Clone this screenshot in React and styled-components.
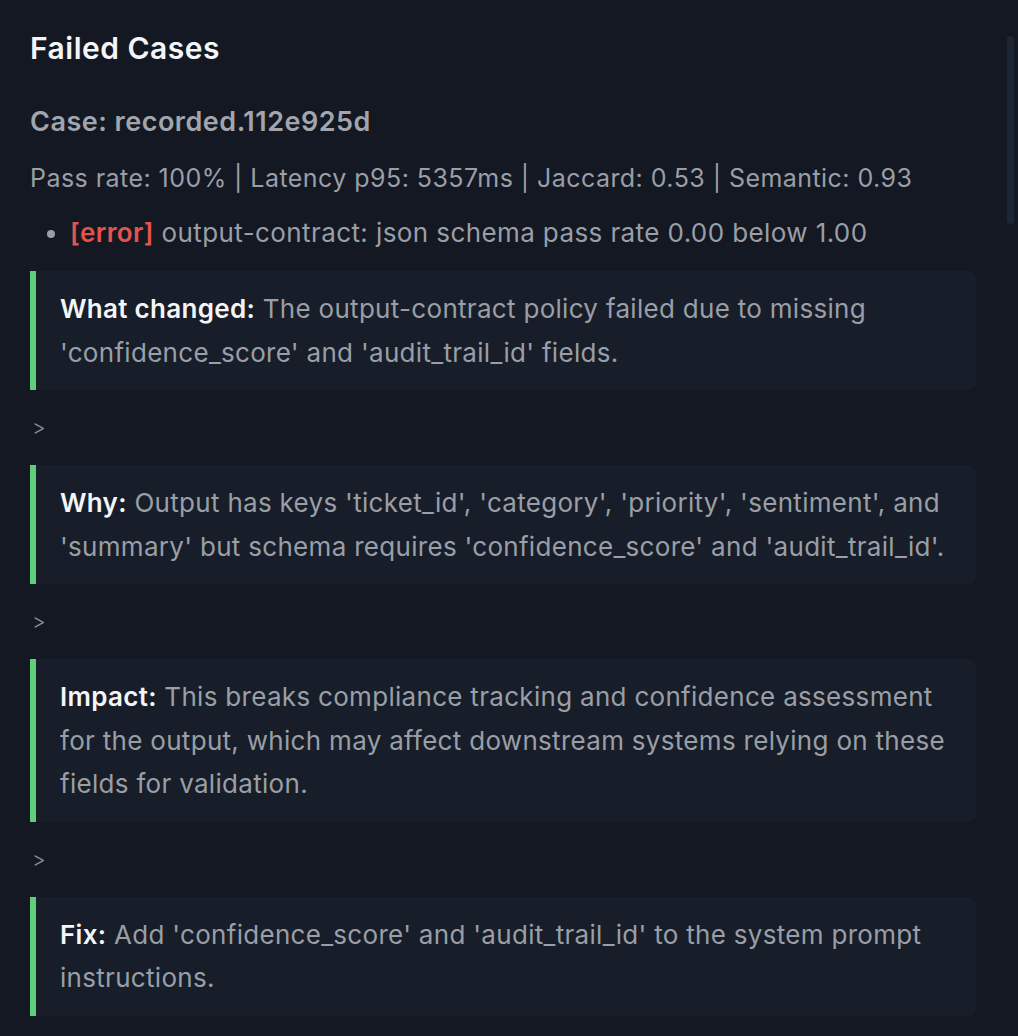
import React from "react";
import styled, { createGlobalStyle } from "styled-components";

const Global = createGlobalStyle`
  html, body { margin: 0; padding: 0; background: #131823; }
  body { font-family: Inter, "Noto Sans", sans-serif; }
`;

const Page = styled.div`
  position: relative;
  height: 1036px;
  overflow: hidden;
  background: #131823;
  box-sizing: border-box;
  padding: 28px 42px 0 30px;
`;

const Scrollbar = styled.div`
  position: absolute;
  right: 4px;
  top: 36px;
  width: 7px;
  height: 188px;
  border-radius: 4px;
  background: #1f2633;
`;

const Title = styled.h2`
  margin: 0 0 37px;
  font-size: 30px;
  letter-spacing: 0.5px;
  line-height: 40px;
  font-weight: 600;
  color: #f4f5f7;
`;

const CaseTitle = styled.h3`
  margin: 0 0 22px;
  font-size: 27px;
  letter-spacing: 0.5px;
  line-height: 34px;
  font-weight: 600;
  color: #a2a5ac;
`;

const Meta = styled.p`
  margin: 0 0 18px;
  font-size: 25px;
  letter-spacing: 0.45px;
  line-height: 34px;
  color: #9a9ea6;
`;

const List = styled.ul`
  margin: 0 0 18px;
  padding-left: 40px;
  font-size: 26px;
  letter-spacing: 0.4px;
  line-height: 40px;
  color: #9a9ea6;
  li::marker { color: #9a9ea6; }
`;

const Tag = styled.span`
  color: #e5534b;
  font-weight: 600;
`;

const Quote = styled.blockquote`
  margin: 0;
  padding: 16px 20px 16px 24px;
  background: #171e29;
  border-left: 6px solid #5dcf78;
  border-radius: 0 8px 8px 0;
  font-size: 26px;
  letter-spacing: 0.3px;
  line-height: 43.5px;
  color: #9a9ea6;
`;

const Label = styled.strong`
  color: #f4f5f7;
  font-weight: 600;
`;

const Chevron = styled.p`
  margin: 0;
  height: 75px;
  display: flex;
  align-items: center;
  padding-left: 2px;
  font-size: 21px;
  font-weight: 300;
  color: #8e929a;
`;

const sections = [
  {
    label: "What changed:",
    text: "The output-contract policy failed due to missing 'confidence_score' and 'audit_trail_id' fields.",
  },
  {
    label: "Why:",
    text: "Output has keys 'ticket_id', 'category', 'priority', 'sentiment', and 'summary' but schema requires 'confidence_score' and 'audit_trail_id'.",
  },
  {
    label: "Impact:",
    text: "This breaks compliance tracking and confidence assessment for the output, which may affect downstream systems relying on these fields for validation.",
  },
  {
    label: "Fix:",
    text: "Add 'confidence_score' and 'audit_trail_id' to the system prompt instructions.",
  },
];

export default function App() {
  return (
    <>
      <Global />
      <Page>
        <Title>Failed Cases</Title>
        <CaseTitle>Case: recorded.112e925d</CaseTitle>
        <Meta>Pass rate: 100% | Latency p95: 5357ms | Jaccard: 0.53 | Semantic: 0.93</Meta>
        <List>
          <li>
            <Tag>[error]</Tag> output-contract: json schema pass rate 0.00 below 1.00
          </li>
        </List>
        {sections.map((s, i) => (
          <React.Fragment key={s.label}>
            {i > 0 && <Chevron>&gt;</Chevron>}
            <Quote>
              <Label>{s.label}</Label> {s.text}
            </Quote>
          </React.Fragment>
        ))}
        <Scrollbar />
      </Page>
    </>
  );
}
